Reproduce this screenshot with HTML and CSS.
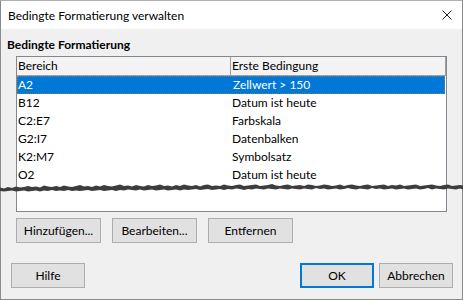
FILE: index.html
```html
<html>
    <head>
        <title>Bedingte Formatierung verwalten</title>
        <meta name="viewport" content="width=device-width, initial-scale=1">
        <link rel="stylesheet" href="styles.css">
    </head>
    <body>
        <div class="dialog">
            <div class="titlebar">
                <span class="title">Bedingte Formatierung verwalten</span>
                <svg class="close" width="10" height="10" viewBox="0 0 10 10">
                    <path d="M0.5 0.5 L9.5 9.5 M9.5 0.5 L0.5 9.5" stroke="#222" stroke-width="1" fill="none"/>
                </svg>
            </div>

            <div class="content">
                <h3 class="section">Bedingte Formatierung</h3>

                <div class="listbox">
                    <div class="list-header">
                        <div class="col">Bereich</div>
                        <div class="col">Erste Bedingung</div>
                    </div>
                    <div class="row selected">
                        <div class="col">A2</div>
                        <div class="col">Zellwert &gt; 150</div>
                    </div>
                    <div class="row">
                        <div class="col">B12</div>
                        <div class="col">Datum ist heute</div>
                    </div>
                    <div class="row">
                        <div class="col">C2:E7</div>
                        <div class="col">Farbskala</div>
                    </div>
                    <div class="row">
                        <div class="col">G2:I7</div>
                        <div class="col">Datenbalken</div>
                    </div>
                    <div class="row">
                        <div class="col">K2:M7</div>
                        <div class="col">Symbolsatz</div>
                    </div>
                    <div class="row">
                        <div class="col">O2</div>
                        <div class="col">Datum ist heute</div>
                    </div>
                </div>

                <div class="actions">
                    <button class="btn">Hinzufügen...</button>
                    <button class="btn">Bearbeiten...</button>
                    <button class="btn">Entfernen</button>
                </div>
            </div>

            <div class="footer">
                <button class="btn small">Hilfe</button>
                <div class="footer-right">
                    <button class="btn small default">OK</button>
                    <button class="btn small">Abbrechen</button>
                </div>
            </div>

            <!-- torn edge of the screenshot -->
            <svg class="tear" width="463" height="12" viewBox="0 0 463 12">
                <polygon fill="#3d3d3d" points="0,5.5 4,6.5 8,5 12,6 16,4.5 20,5.5 24,5 28,4 32,5 36,4.5 40,5.5 44,3.5 48,4.5 52,5 56,4 60,5 64,3.5 68,4.5 72,5 76,4 80,3 84,4.5 88,4 92,5 96,3.5 100,4.5 104,3 108,4 112,4.5 116,3.5 120,2.5 124,4 128,3.5 132,4.5 136,3 140,4 144,4.5 148,3 152,4 156,3.5 160,2.5 164,4 168,3.5 172,4.5 176,3 180,4 184,2.5 188,3.5 192,4 196,3 200,4.5 204,3 208,2.5 212,4 216,3.5 220,4 224,2.5 228,3.5 232,4 236,3 240,2.5 244,4 248,3.5 252,3 256,2.5 260,4 264,3.5 268,3 272,2 276,3.5 280,4 284,3 288,2.5 292,4 296,3.5 300,3 304,4 308,2.5 312,3 316,4 320,3.5 324,2.5 328,3 332,4 336,3.5 340,2.5 344,4 348,3 352,2.5 356,3.5 360,4 364,3 368,2.5 372,4 376,3.5 380,3 384,2.5 388,4 392,3 396,3.5 400,2.5 404,4 408,3.5 412,3 416,2.5 420,4 424,3.5 428,3 432,2.5 436,3.5 440,4 444,3 448,2.5 452,4 456,3.5 460,3 463,3.5 463,7.5 460,6.5 456,7.5 452,7 448,6.5 444,7.5 440,7 436,6.5 432,7.5 428,6 424,7 420,7.5 416,6.5 412,7 408,7.5 404,6.5 400,7 396,7.5 392,6.5 388,7 384,7.5 380,6.5 376,7 372,6 368,7.5 364,7 360,6.5 356,7.5 352,7 348,6 344,7 340,7.5 336,6.5 332,7 328,7.5 324,6.5 320,7 316,6 312,7.5 308,7 304,6.5 300,7.5 296,7 292,6.5 288,7.5 284,7 280,6.5 276,7.5 272,7 268,6.5 264,7.5 260,7 256,6.5 252,7.5 248,7 244,8 240,7 236,6.5 232,7.5 228,7 224,8 220,7 216,7.5 212,8 208,7 204,7.5 200,8 196,7 192,7.5 188,8 184,7.5 180,8.5 176,7.5 172,8 168,8.5 164,7.5 160,8 156,8.5 152,7.5 148,8 144,8.5 140,7.5 136,8.5 132,8 128,7.5 124,8.5 120,8 116,9 112,8 108,8.5 104,9 100,8 96,8.5 92,9 88,8 84,8.5 80,9 76,8.5 72,9 68,8 64,9 60,8.5 56,9 52,8 48,9 44,8.5 40,9.5 36,8.5 32,9 28,9.5 24,8.5 20,9 16,9.5 12,8.5 8,9 4,9.5 0,9"/>
            </svg>
        </div>
    </body>
</html>
```

FILE: styles.css
```css
body {
    margin: 0;
    font-family: Lato, "Noto Sans", sans-serif;
    font-size: 12px;
    color: #000;
}

.dialog {
    position: relative;
    width: 463px;
    height: 300px;
    box-sizing: border-box;
    border: 1px solid #8a8a8a;
    border-top-color: #b0b0b0;
    background: #f0f0f0;
    display: flex;
    flex-direction: column;
}

.titlebar {
    height: 28px;
    background: #fff;
    display: flex;
    align-items: center;
    justify-content: space-between;
    padding: 0 10px 0 7px;
}

.content {
    padding: 0 15px 0 6px;
}

.section {
    margin: 8px 0 3px 0;
    font-size: 12px;
    font-weight: bold;
    line-height: 16px;
}

.listbox {
    margin-left: 9px;
    height: 156px;
    box-sizing: border-box;
    border: 1px solid #828790;
    background: #fff;
    overflow: hidden;
}

.list-header {
    display: grid;
    grid-template-columns: 214px 1fr;
    height: 19px;
    box-sizing: border-box;
    background: #f3f3f3;
    border-bottom: 1px solid #a0a0a0;
    border-right: 1px solid #a0a0a0;
}

.list-header .col {
    line-height: 18px;
    padding-left: 1px;
    border-right: 1px solid #a0a0a0;
}

.list-header .col:last-child {
    border-right: 0;
}

.row {
    display: grid;
    grid-template-columns: 214px 1fr;
    height: 18px;
    line-height: 18px;
    box-sizing: border-box;
}

.row .col {
    padding-left: 1px;
}

.row.selected {
    background: #0078d7;
    color: #fff;
    border: 1px dotted #7a7a7a;
    line-height: 16px;
    margin-right: 1px;
}

.row.selected .col:first-child {
    padding-left: 0;
    width: 213px;
}

.actions {
    display: flex;
    gap: 11px;
    margin: 6px 0 0 9px;
}

.btn {
    width: 85px;
    height: 25px;
    padding: 0;
    font-family: inherit;
    font-size: 12px;
    color: #000;
    background: #e1e1e1;
    border: 1px solid #adadad;
}

.btn.small {
    width: 74px;
}

.btn.default {
    border: 2px solid #0078d7;
}

.footer {
    display: flex;
    justify-content: space-between;
    margin-top: 20px;
    padding: 0 9px 0 10px;
}

.footer-right {
    display: flex;
    gap: 5px;
}

.tear {
    position: absolute;
    left: -1px;
    top: 181px;
}
```
